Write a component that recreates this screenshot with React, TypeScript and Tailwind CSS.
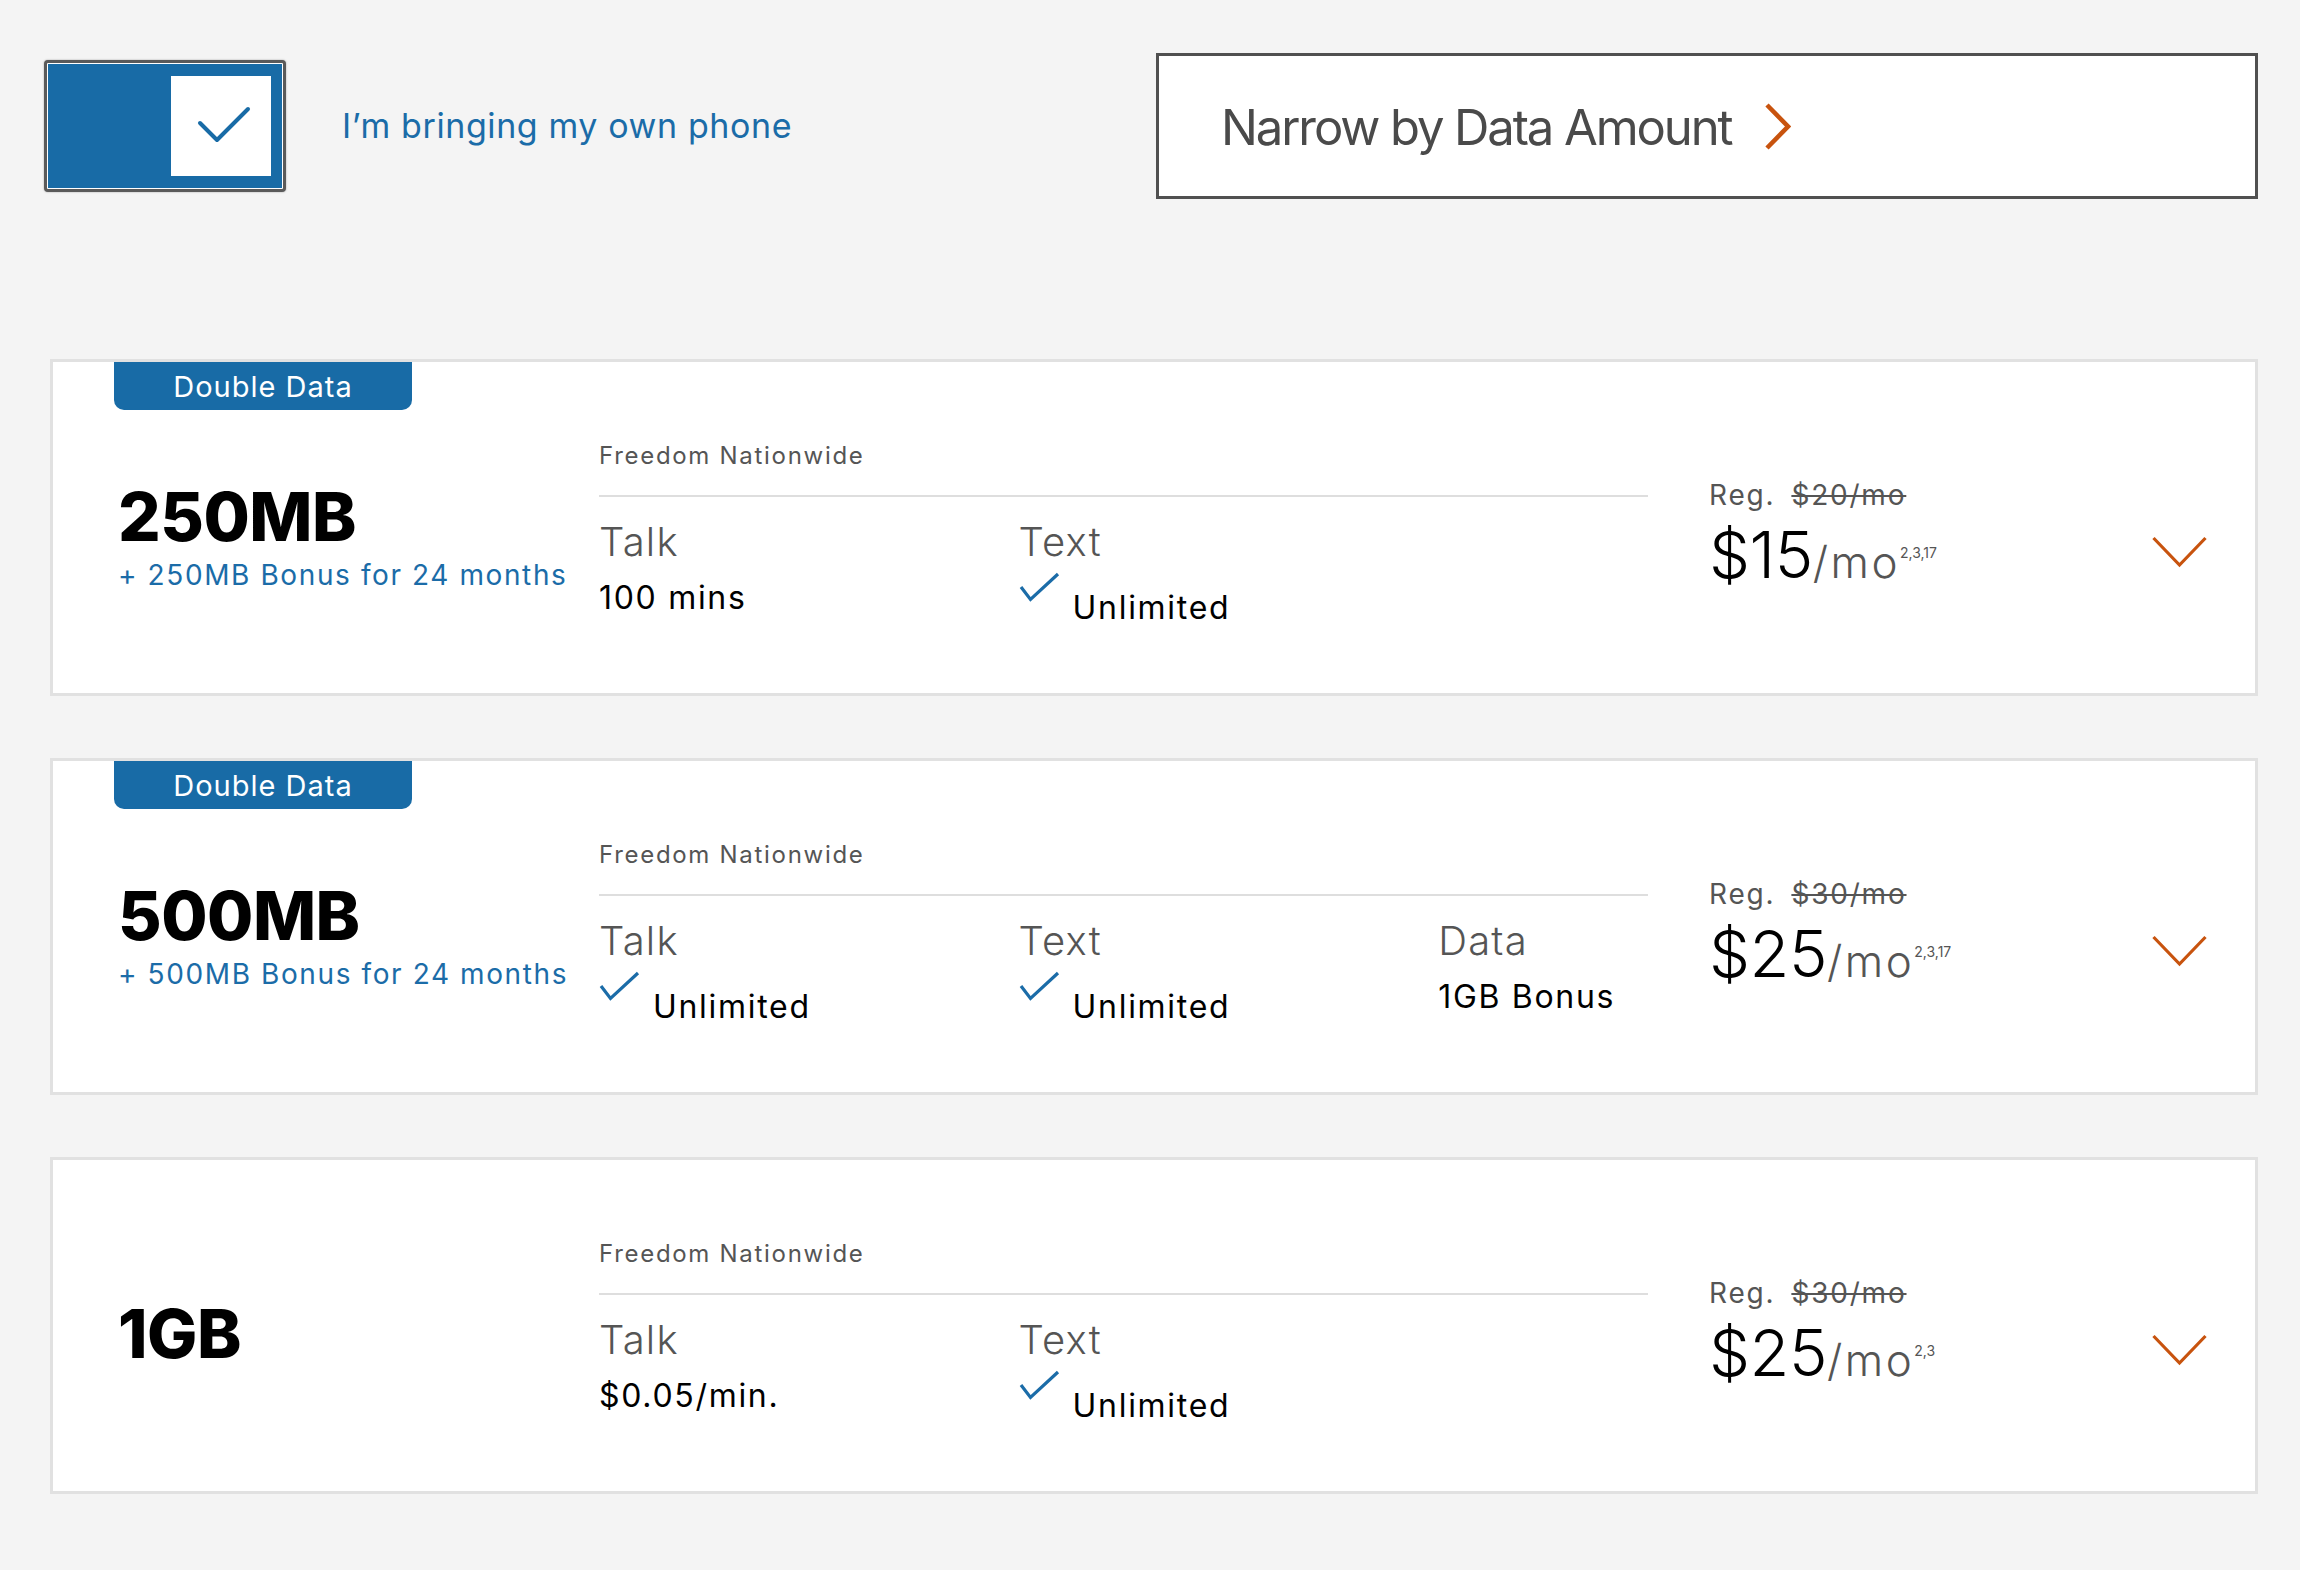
import React from 'react';

interface PlanColumn {
  label: string;
  value: string;
  check?: boolean;
}

interface Plan {
  badge?: string;
  amount: string;
  bonus?: string;
  columns: PlanColumn[];
  reg: string;
  price: string;
  notes: string;
}

const plans: Plan[] = [
  {
    badge: 'Double Data',
    amount: '250MB',
    bonus: '+ 250MB Bonus for 24 months',
    columns: [
      { label: 'Talk', value: '100 mins' },
      { label: 'Text', value: 'Unlimited', check: true },
    ],
    reg: '$20/mo',
    price: '$15',
    notes: '2,3,17',
  },
  {
    badge: 'Double Data',
    amount: '500MB',
    bonus: '+ 500MB Bonus for 24 months',
    columns: [
      { label: 'Talk', value: 'Unlimited', check: true },
      { label: 'Text', value: 'Unlimited', check: true },
      { label: 'Data', value: '1GB Bonus' },
    ],
    reg: '$30/mo',
    price: '$25',
    notes: '2,3,17',
  },
  {
    amount: '1GB',
    columns: [
      { label: 'Talk', value: '$0.05/min.' },
      { label: 'Text', value: 'Unlimited', check: true },
    ],
    reg: '$30/mo',
    price: '$25',
    notes: '2,3',
  },
];

function SmallCheck() {
  return (
    <svg width="41" height="30" viewBox="0 0 41 30" className="shrink-0">
      <polyline
        points="2,15 11.5,27.5 39,2"
        fill="none"
        stroke="#1b6ca8"
        strokeWidth="3.2"
        strokeLinejoin="miter"
      />
    </svg>
  );
}

function Toggle() {
  return (
    <div className="w-[242px] h-[132px] rounded-[4px] border-[3px] border-[#5a5a5a] bg-white p-px shadow-[0_0_2px_rgba(0,0,0,0.35)]">
      <div className="h-full w-full bg-[#186ba6] flex items-center justify-end pr-[11px]">
        <div className="w-[100px] h-[100px] bg-white flex items-center justify-center">
          <svg width="60" height="44" viewBox="0 0 60 44">
            <polyline
              points="9,19 26,36 57,5"
              fill="none"
              stroke="#186ba6"
              strokeWidth="4"
              strokeLinecap="round"
              strokeLinejoin="round"
            />
          </svg>
        </div>
      </div>
    </div>
  );
}

function PlanCard({ plan }: { plan: Plan }) {
  return (
    <div className="relative h-[337px] bg-white border-[3px] border-[#e1e1e1] flex items-center pt-[12px] pl-[65px] pr-[48px]">
      {plan.badge && (
        <div className="absolute top-0 left-[61px] w-[298px] h-[48px] bg-[#186ba6] rounded-b-[10px] flex items-center justify-center">
          <span className="text-white text-[29px] leading-none tracking-[1px]">{plan.badge}</span>
        </div>
      )}

      <div className="w-[481px] shrink-0 mt-[4px]">
        <div className="text-[67px] leading-none font-extrabold text-black tracking-[-0.5px]">
          {plan.amount}
        </div>
        {plan.bonus && (
          <div className="mt-[11px] text-[28px] leading-none text-[#1b6ca8] tracking-[1.6px] whitespace-nowrap">
            {plan.bonus}
          </div>
        )}
      </div>

      <div className="w-[1049px] shrink-0">
        <div className="text-[24px] leading-none text-[#555555] tracking-[1.7px]">Freedom Nationwide</div>
        <div className="mt-[27px] h-[2px] bg-[#dedede]" />
        <div className="grid grid-cols-[40%_40%_20%] mt-[25px]">
          {plan.columns.map((col) => (
            <div key={col.label}>
              <div className="text-[40px] leading-none font-light text-[#555555] tracking-[1.2px]">
                {col.label}
              </div>
              {col.check ? (
                <div className="flex items-start mt-[10px]">
                  <SmallCheck />
                  <span className="ml-[13px] mt-[20px] text-[32px] leading-none text-black tracking-[1.7px]">
                    {col.value}
                  </span>
                </div>
              ) : (
                <div className="mt-[20px] text-[32px] leading-none text-black tracking-[1.7px]">{col.value}</div>
              )}
            </div>
          ))}
        </div>
      </div>

      <div className="flex-1 ml-[61px]">
        <div className="flex items-baseline gap-[16px] text-[28px] leading-none text-[#555555] tracking-[1.8px]">
          <span>Reg.</span>
          <span className="line-through decoration-[2px]">{plan.reg}</span>
        </div>
        <div className="mt-[13px] leading-none whitespace-nowrap">
          <span className="text-[65px] font-light text-black tracking-[-0.5px]">{plan.price}</span>
          <span className="text-[44px] font-light text-[#555555] tracking-[2.5px]">/mo</span>
          <span className="text-[14px] text-[#555555] align-[20px]">{plan.notes}</span>
        </div>
      </div>

      <div className="mt-[36px] shrink-0">
        <svg width="55" height="32" viewBox="0 0 55 32">
          <polyline points="1.5,2 27.5,29 53.5,2" fill="none" stroke="#c8530e" strokeWidth="3.2" />
        </svg>
      </div>
    </div>
  );
}

export default function App() {
  return (
    <div className="min-h-[1570px] bg-[#f4f4f4] font-['Inter',sans-serif] pt-[53px] pl-[44px] pr-[42px] pb-[60px]">
      <div className="flex items-center">
        <Toggle />
        <span className="ml-[56px] text-[34px] leading-none text-[#1b6ca8] tracking-[0.6px]">
          I’m bringing my own phone
        </span>
        <div className="ml-auto w-[1102px] h-[146px] bg-white border-[3px] border-[#505050] flex items-center pl-[62px] pt-[2px]">
          <span className="text-[49px] leading-none text-[#4a4a4a] tracking-[-2.1px]">Narrow by Data Amount</span>
          <svg width="27" height="47" viewBox="0 0 27 47" className="ml-[33px] -mt-[2px]">
            <polyline points="3,2 24,23.5 3,45" fill="none" stroke="#c8530e" strokeWidth="4.5" />
          </svg>
        </div>
      </div>

      <div className="mt-[160px] ml-[6px] flex flex-col gap-[62px]">
        {plans.map((plan) => (
          <PlanCard key={plan.amount} plan={plan} />
        ))}
      </div>
    </div>
  );
}
